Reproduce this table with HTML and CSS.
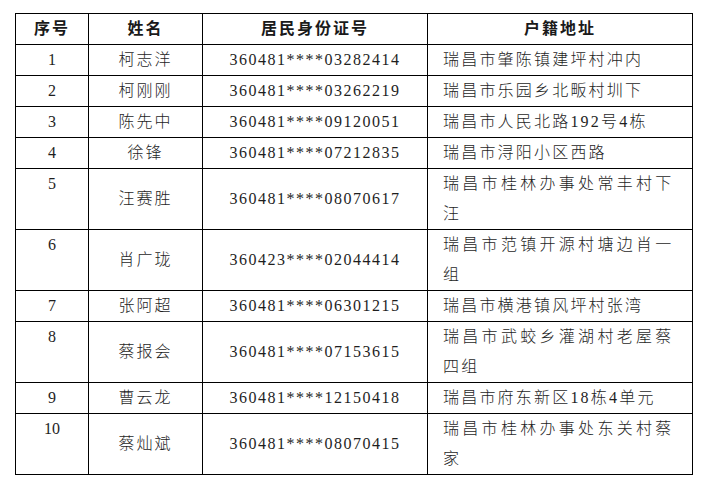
FILE: index.html
```html
<!DOCTYPE html>
<html lang="zh-CN">
<head>
<meta charset="utf-8">
<title>名单</title>
<link rel="stylesheet" href="styles.css">
</head>
<body>
<table class="roster">
  <colgroup>
    <col class="c-no">
    <col class="c-name">
    <col class="c-id">
    <col class="c-addr">
  </colgroup>
  <thead>
    <tr>
      <th>序号</th>
      <th>姓名</th>
      <th>居民身份证号</th>
      <th>户籍地址</th>
    </tr>
  </thead>
  <tbody>
    <tr><td class="no">1</td><td class="name">柯志洋</td><td class="id">360481****03282414</td><td class="addr">瑞昌市肇陈镇建坪村冲内</td></tr>
    <tr><td class="no">2</td><td class="name">柯刚刚</td><td class="id">360481****03262219</td><td class="addr">瑞昌市乐园乡北畈村圳下</td></tr>
    <tr><td class="no">3</td><td class="name">陈先中</td><td class="id">360481****09120051</td><td class="addr">瑞昌市人民北路192号4栋</td></tr>
    <tr><td class="no">4</td><td class="name">徐锋</td><td class="id">360481****07212835</td><td class="addr">瑞昌市浔阳小区西路</td></tr>
    <tr><td class="no">5</td><td class="name">汪赛胜</td><td class="id">360481****08070617</td><td class="addr"><span class="wide">瑞昌市桂林办事处常丰村下</span><br>汪</td></tr>
    <tr><td class="no">6</td><td class="name">肖广珑</td><td class="id">360423****02044414</td><td class="addr"><span class="wide">瑞昌市范镇开源村塘边肖一</span><br>组</td></tr>
    <tr><td class="no">7</td><td class="name">张阿超</td><td class="id">360481****06301215</td><td class="addr">瑞昌市横港镇风坪村张湾</td></tr>
    <tr><td class="no">8</td><td class="name">蔡报会</td><td class="id">360481****07153615</td><td class="addr"><span class="wide">瑞昌市武蛟乡灌湖村老屋蔡</span><br>四组</td></tr>
    <tr><td class="no">9</td><td class="name">曹云龙</td><td class="id">360481****12150418</td><td class="addr">瑞昌市府东新区18栋4单元</td></tr>
    <tr><td class="no">10</td><td class="name">蔡灿斌</td><td class="id">360481****08070415</td><td class="addr"><span class="wide">瑞昌市桂林办事处东关村蔡</span><br>家</td></tr>
  </tbody>
</table>
</body>
</html>
```
FILE: styles.css
```css
html, body {
  margin: 0;
  padding: 0;
  background: #ffffff;
}

body {
  font-family: "Liberation Serif", "Noto Sans CJK SC", serif;
  font-size: 16px;
  font-weight: 300;
  color: #1e1e1e;
}

.roster {
  margin: 13px 0 0 15px;
  border-collapse: collapse;
  table-layout: fixed;
  width: 677px;
}

.c-no { width: 73px; }
.c-name { width: 114px; }
.c-id { width: 225px; }
.c-addr { width: 265px; }

.roster th,
.roster td {
  border: 1px solid #000000;
  padding: 0;
  line-height: 30px;
  text-align: center;
  vertical-align: middle;
  white-space: nowrap;
}

.roster th {
  font-weight: bold;
  letter-spacing: 2px;
  color: #1a1a1a;
}

.roster td.no {
  vertical-align: top;
}

.roster td.name {
  letter-spacing: 2px;
}

.roster td.id {
  letter-spacing: 1.5px;
}

.roster td.addr {
  text-align: left;
  vertical-align: top;
  letter-spacing: 2.2px;
  padding: 0 0 0 15px;
}

.roster td.addr .wide {
  letter-spacing: 3.3px;
}
```
